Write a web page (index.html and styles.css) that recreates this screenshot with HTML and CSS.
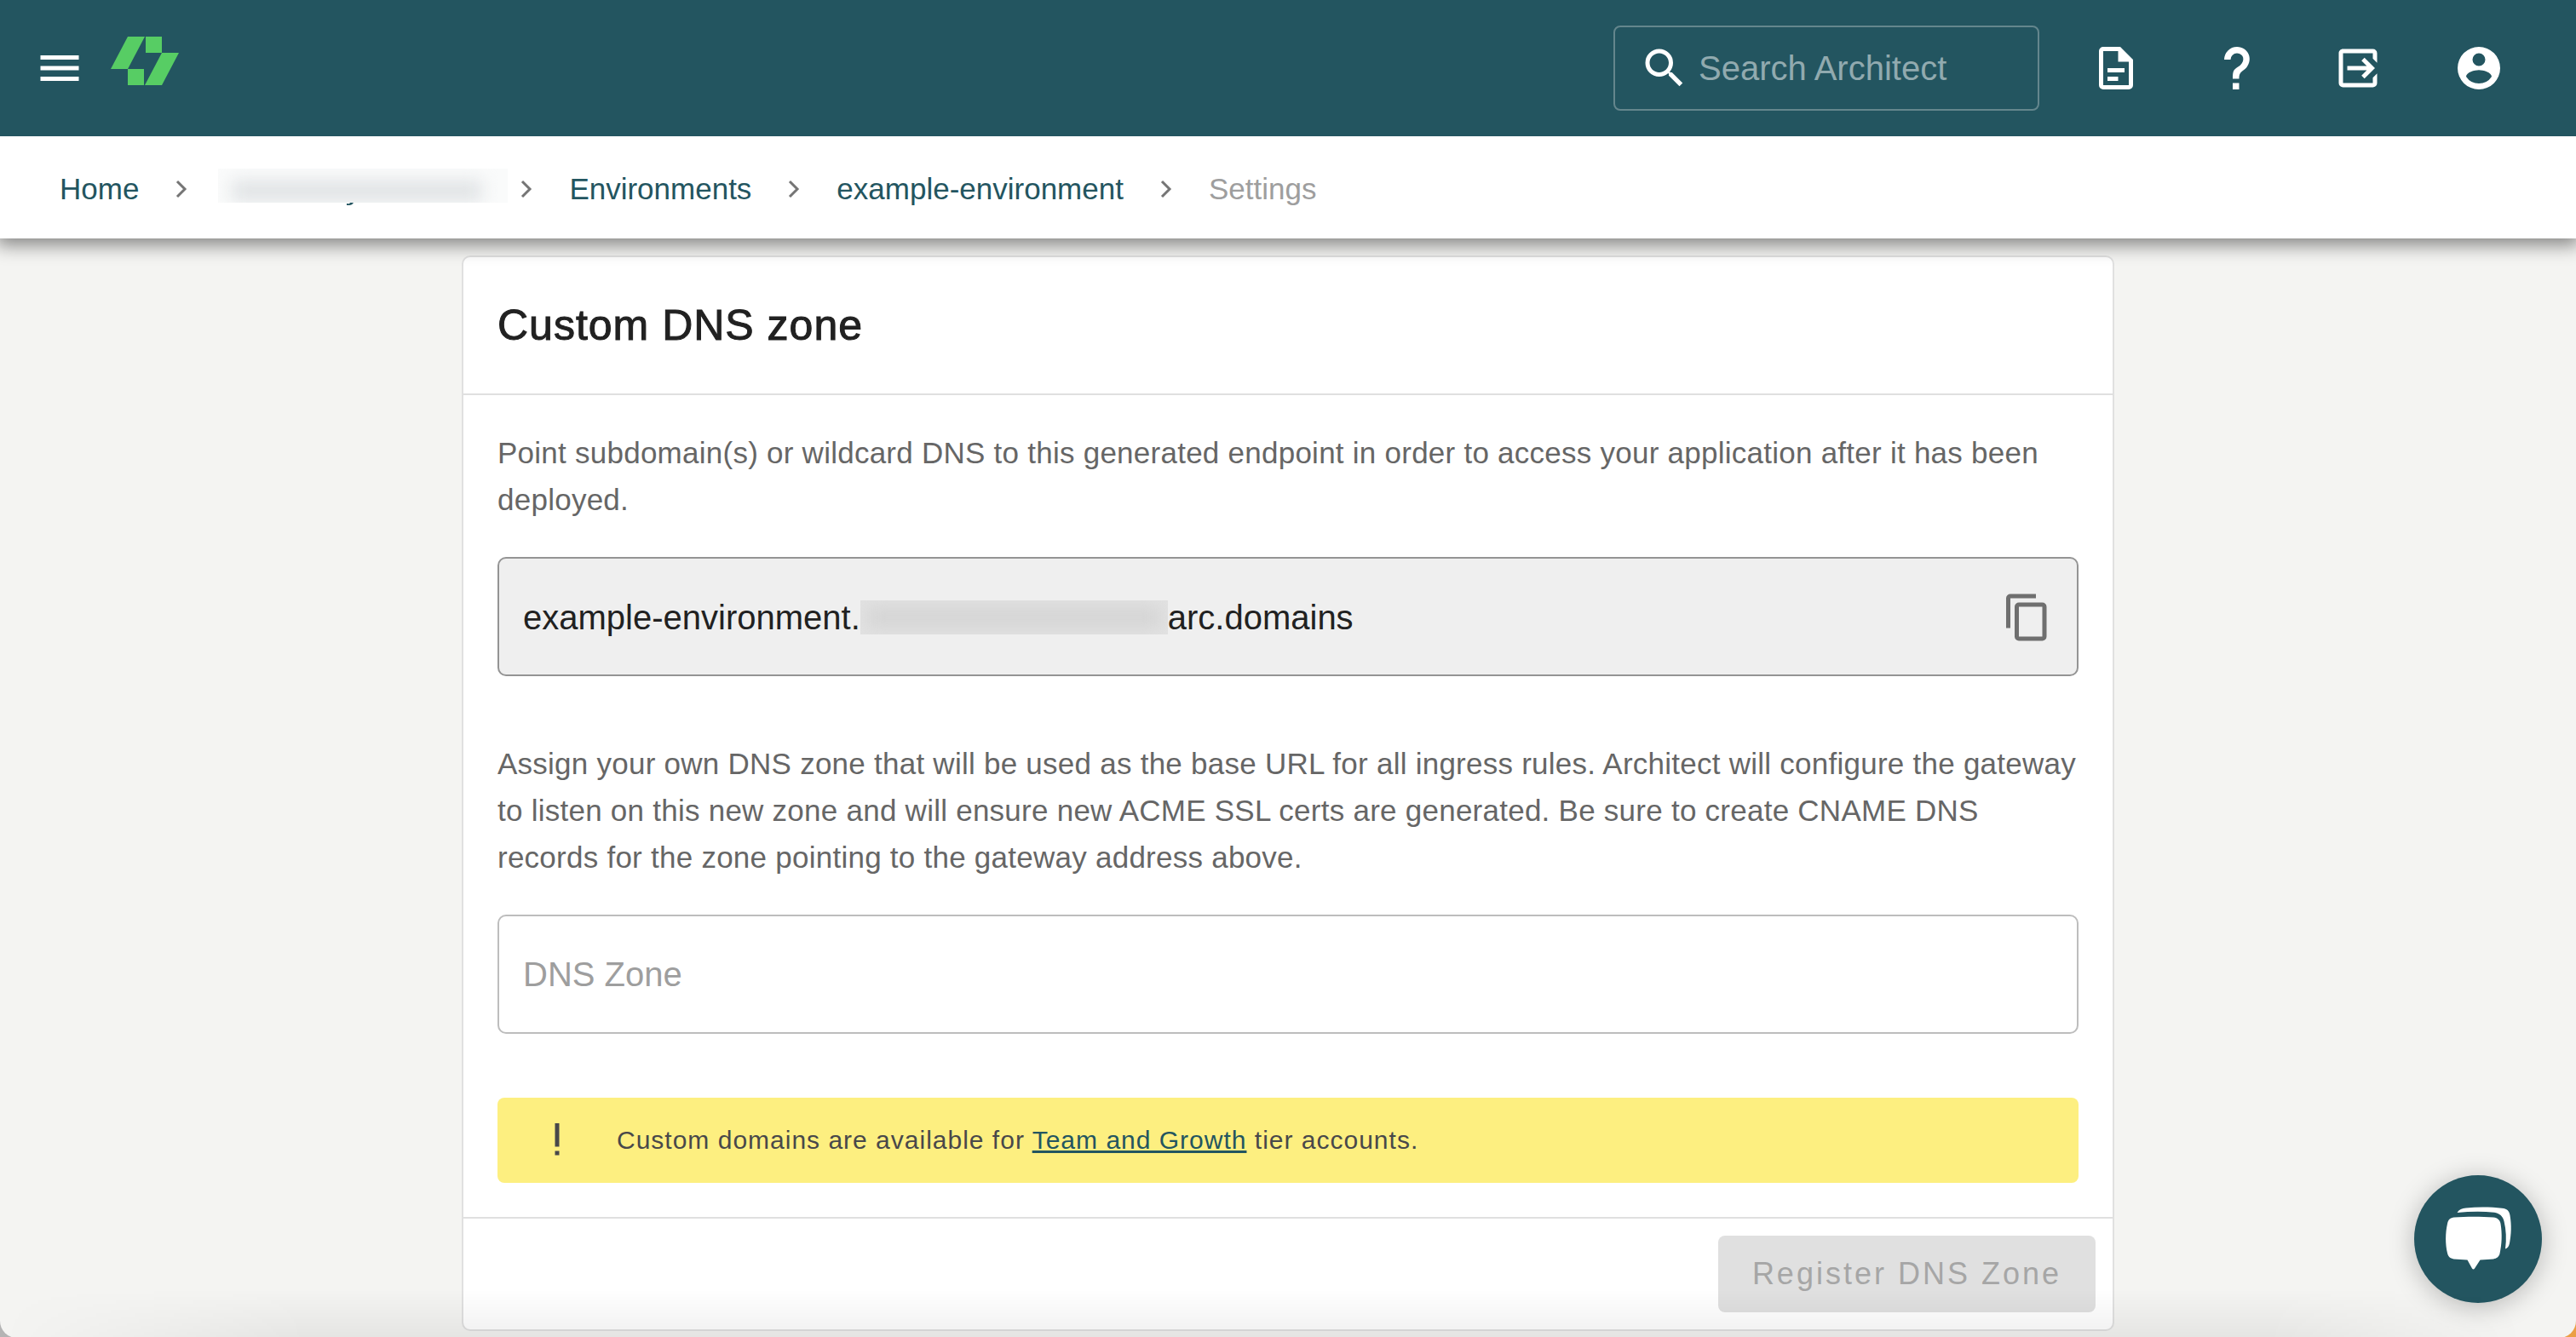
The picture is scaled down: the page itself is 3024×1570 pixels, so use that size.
FILE: index.html
```html
<!DOCTYPE html>
<html lang="en">
<head>
<meta charset="utf-8">
<meta name="viewport" content="width=device-width, initial-scale=1">
<title>Settings - example-environment</title>
<link rel="stylesheet" href="styles.css">
</head>
<body>
<div class="window">
<header class="topbar">
  <div class="topbar-start">
    <button class="icon-button" type="button" aria-label="Menu"><svg class="icon-md" viewBox="0 0 24 24"><path d="M3 6h18v2H3V6m0 5h18v2H3v-2m0 5h18v2H3v-2z"/></svg></button>
    <a class="logo" href="#" aria-label="Architect"><svg viewBox="0 0 80 58"><path d="M20 0H40L20 38H0zM41 0H60V19H41zM60 19H80L60 57H40zM20 38H39V57H20z"/></svg></a>
  </div>
  <div class="topbar-end">
    <label class="search">
      <svg class="icon-md" viewBox="0 0 24 24"><path d="M9.5 3A6.500 6.500 0 0 1 16 9.500c0 1.610-.59 3.090-1.560 4.230l.27.27h.79l5 5-1.500 1.500-5-5v-.79l-.27-.27A6.516 6.516 0 0 1 9.500 16 6.500 6.500 0 0 1 3 9.500 6.500 6.500 0 0 1 9.500 3m0 2C7 5 5 7 5 9.500S7 14 9.500 14 14 12 14 9.500 12 5 9.500 5z"/></svg>
      <input type="text" placeholder="Search Architect" aria-label="Search Architect">
    </label>
    <nav class="actions" aria-label="Account">
      <a href="#" aria-label="Docs"><svg class="icon-md" viewBox="0 0 24 24"><path d="M6 2a2 2 0 0 0-2 2v16a2 2 0 0 0 2 2h12a2 2 0 0 0 2-2V8l-6-6H6m0 2h7v5h5v11H6V4m2 8v2h8v-2H8m0 4v2h5v-2H8z"/></svg></a>
      <a href="#" aria-label="Help"><svg class="icon-md" viewBox="0 0 24 24"><path d="M10 19h3v3h-3v-3m2-17c5.350.22 7.680 5.620 4.500 9.670-.83 1-2.170 1.660-2.830 2.500C13 15 13 16 13 17h-3c0-1.670 0-3.080.67-4.080.66-1 2-1.590 2.830-2.250C15.920 8.430 15.320 5.260 12 5a3 3 0 0 0-3 3H6a6 6 0 0 1 6-6z"/></svg></a>
      <a href="#" aria-label="Log out"><svg class="icon-md" viewBox="0 0 24 24"><path d="M19 3H5c-1.110 0-2 .89-2 2v14a2 2 0 0 0 2 2h14a2 2 0 0 0 2-2v-4.500l-2 2V19H5V5h14v2.500l2 2V5a2 2 0 0 0-2-2m-3.920 4.080L13.670 8.500 16.170 11H7v2h9.170l-2.500 2.500 1.410 1.420L20 12z"/></svg></a>
      <a href="#" aria-label="Account"><svg class="icon-md" viewBox="0 0 24 24"><path fill-rule="evenodd" d="M12 2a10 10 0 1 0 0 20 10 10 0 0 0 0-20m0 3a3 3 0 1 1 0 6 3 3 0 0 1 0-6m0 14.200a7.200 7.200 0 0 1-6-3.220c.03-1.990 4-3.080 6-3.080s5.970 1.090 6 3.080a7.200 7.200 0 0 1-6 3.220z"/></svg></a>
    </nav>
  </div>
</header>
<nav class="breadcrumb" aria-label="Breadcrumb">
  <a href="#">Home</a>
  <svg class="chevron" viewBox="0 0 12 20"><path d="M1 1l9 9-9 9"/></svg>
  <a class="account-link" href="#" aria-label="Account"><span class="smudge"></span><svg class="descender" viewBox="0 0 8 3"><path d="M0 1l3 .3L4 0h4C7 2 5 3 3 3H0z"/></svg></a>
  <svg class="chevron" viewBox="0 0 12 20"><path d="M1 1l9 9-9 9"/></svg>
  <a href="#">Environments</a>
  <svg class="chevron" viewBox="0 0 12 20"><path d="M1 1l9 9-9 9"/></svg>
  <a href="#">example-environment</a>
  <svg class="chevron" viewBox="0 0 12 20"><path d="M1 1l9 9-9 9"/></svg>
  <span class="current">Settings</span>
</nav>
<main class="content">
  <section class="card">
    <h1>Custom DNS zone</h1>
    <div class="card-body">
      <p>Point subdomain(s) or wildcard DNS to this generated endpoint in order to access your application after it has been deployed.</p>
      <div class="field endpoint">
        <span>example-environment.</span><span class="smudge"></span><span>arc.domains</span>
        <button class="copy" type="button" aria-label="Copy"><svg class="icon-md" viewBox="0 0 24 24"><path d="M19 21H8V7h11m0-2H8a2 2 0 0 0-2 2v14a2 2 0 0 0 2 2h11a2 2 0 0 0 2-2V7a2 2 0 0 0-2-2m-3-4H4a2 2 0 0 0-2 2v14h2V3h12V1z"/></svg></button>
      </div>
      <p>Assign your own DNS zone that will be used as the base URL for all ingress rules. Architect will configure the gateway to listen on this new zone and will ensure new ACME SSL certs are generated. Be sure to create CNAME DNS records for the zone pointing to the gateway address above.</p>
      <input class="field zone" type="text" placeholder="DNS Zone" aria-label="DNS Zone">
      <div class="notice">
        <svg class="icon-md" viewBox="0 0 24 24"><path d="M11 4h2v11h-2V4m0 15v-2h2v2h-2z"/></svg>
        <span>Custom domains are available for <a href="#">Team and Growth</a> tier accounts.</span>
      </div>
    </div>
    <footer><button class="register" type="button" disabled>Register DNS Zone</button></footer>
  </section>
</main>
<button class="chat" type="button" aria-label="Open chat"><svg viewBox="0 0 80 76"><path d="M15.500 7C18 3 21 2 26 1.500 40 0 56 .3 68 1.800c6 .7 8.500 2.700 9.500 8.200 2 12 1.500 22-.5 33-1 4-2.500 6-5 6.500C73.500 38 73 27 70.500 17 69 11 65.500 8 59 6.800 45 5 30 5.500 15.500 7z"/><path d="M12 12.500c14-1 32-1 46 0 5 .5 8 3.500 8.500 7.500 2 12 1.500 24-1 35-1 4-3.500 5.500-7.500 6.500-5 .5-10 .5-15.500 1L36 72.500q-1.500 2-3 0L27.500 62.500c-5.500-.5-10.500-.5-16-1C7 60.500 5 58.500 4 54.500 1.500 44 1.500 31 4 20c1-5 3.500-7 8-7.500z"/></svg></button>
</div>
</body>
</html>
```
FILE: styles.css
```css
* { box-sizing: border-box; }
html { background: linear-gradient(90deg, #b4b4b4 50%, #eb9f45 50%); }
body { margin: 0; font-family: "Liberation Sans", Arial, sans-serif; font-size: 35px; color: #212121; }
a { color: #235560; text-decoration: none; }
button { border: 0; padding: 0; background: none; font: inherit; color: inherit; cursor: pointer; }
svg { display: block; fill: currentColor; }

.window {
  min-height: 100vh;
  overflow: hidden;
  border-radius: 0 0 20px 20px;
  background: #f4f4f2;
}
/* soft shade along the bottom edge of the viewport */
.window::after {
  content: "";
  position: fixed;
  inset: auto 0 0;
  height: 56px;
  background: linear-gradient(to top, rgba(0, 0, 0, 0.06), transparent);
  mask-image: linear-gradient(90deg, transparent, #000 12%, #000 88%, transparent 98%);
  pointer-events: none;
}

.topbar {
  position: relative;
  z-index: 1;
  display: flex;
  align-items: center;
  justify-content: space-between;
  height: 160px;
  padding: 0 84px 0 40px;
  background: #235560;
  color: #fff;
}
.topbar-start, .topbar-end, .actions { display: flex; align-items: center; }
.topbar-start { gap: 30px; }
.icon-md { flex: none; width: 60px; height: 60px; }
.logo { color: #57cd64; padding-bottom: 16px; }
.logo svg { width: 80px; height: 58px; }
.search {
  display: flex;
  align-items: center;
  gap: 10px;
  width: 500px;
  height: 100px;
  margin-right: 60px;
  padding: 0 28px;
  border: 2px solid #64868d;
  border-radius: 8px;
}
.search input {
  flex: 1;
  min-width: 0;
  padding: 0;
  border: 0;
  outline: 0;
  background: none;
  font: inherit;
  font-size: 40px;
  color: #fff;
}
.search input::placeholder { color: #91aaaf; opacity: 1; }
.actions { gap: 82px; }
.actions a { color: #fff; }

.breadcrumb {
  position: relative;
  display: flex;
  align-items: center;
  height: 120px;
  padding: 4px 70px 0;
  background: #fff;
  box-shadow: 0 4px 20px 4px rgba(0, 0, 0, 0.45);
}
.chevron {
  width: 12px;
  height: 20px;
  margin: 0 44px;
  overflow: visible;
  fill: none;
  stroke: #757575;
  stroke-width: 3;
}
.smudge {
  position: relative;
  display: block;
  height: 40px;
  overflow: hidden;
  background: #fafbfb;
}
.smudge::after {
  content: "";
  position: absolute;
  inset: 14px 30px 2px 16px;
  background: #dfe2e4;
  filter: blur(10px);
}
.account-link { position: relative; width: 305px; }
.account-link .smudge { margin: -8px -28px 0 -7px; }
.descender { position: absolute; left: 144px; top: 100%; width: 8px; height: 3px; }
.current { color: #9e9e9e; }

.content { padding: 20px 40px 8px; }
.card {
  max-width: 1940px;
  margin: 0 auto;
  border: 2px solid #e0e0e0;
  border-radius: 10px;
  background: #fff;
}
h1 {
  margin: 0;
  padding: 49px 40px;
  border-bottom: 2px solid #e0e0e0;
  font-size: 50px;
  font-weight: 500;
  line-height: 62px;
  letter-spacing: 1px;
  -webkit-text-stroke: 1px;
}
.card-body { padding: 40px; }
p { margin: 0 0 40px; line-height: 55px; letter-spacing: 0.0071428571em; color: #666; }
.field {
  display: flex;
  align-items: center;
  width: 100%;
  height: 140px;
  margin-bottom: 75px;
  padding: 0 28px;
  border: 2px solid #949494;
  border-radius: 10px;
  font: inherit;
  font-size: 40px;
}
.endpoint { padding-top: 2px; background: #efefef; }
.endpoint .smudge { width: 361px; background: #e2e2e2; }
.endpoint .smudge::after { inset: 8px; background: #d4d4d4; }
.copy { margin-left: auto; color: #6f6f6f; }
.zone { border-color: #bdbdbd; background: #fff; }
.zone::placeholder { color: #9e9e9e; opacity: 1; }
.notice {
  display: flex;
  align-items: center;
  gap: 40px;
  height: 100px;
  padding: 0 40px;
  border-radius: 8px;
  background: #fdef80;
  color: #48484a;
  font-size: 30px;
  letter-spacing: 1px;
}
.notice a { text-decoration: underline; text-decoration-thickness: 3px; }
footer { display: flex; justify-content: flex-end; padding: 20px; border-top: 2px solid #e0e0e0; }
.register {
  height: 90px;
  padding: 0 40px;
  border-radius: 8px;
  background: #e0e0e0;
  color: #a6a6a6;
  font-size: 36px;
  font-weight: 500;
  letter-spacing: 3px;
}
.chat {
  position: fixed;
  right: 40px;
  bottom: 40px;
  display: grid;
  place-items: center;
  width: 150px;
  height: 150px;
  border-radius: 50%;
  background: #235560;
  color: #fff;
  box-shadow: 0 4px 30px rgba(0, 0, 0, 0.25);
}
.chat svg { width: 80px; height: 76px; }
```
